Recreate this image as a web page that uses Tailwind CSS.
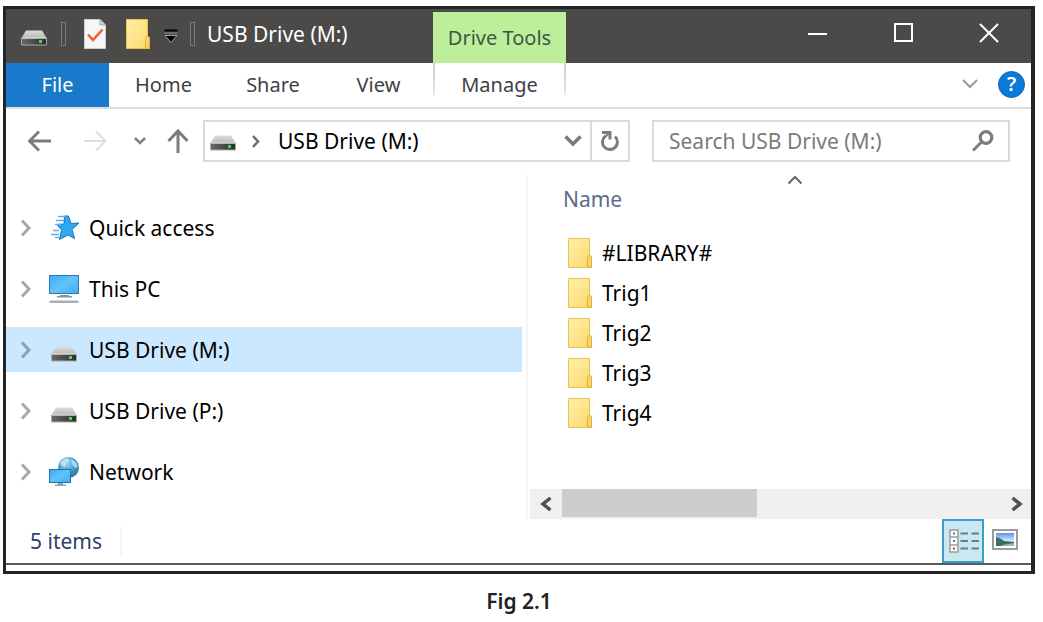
<!DOCTYPE html>
<html lang="en">
<head>
  <meta charset="UTF-8" />
  <meta name="viewport" content="width=device-width, initial-scale=1.0"/>
  <title>USB Drive (M:)</title>
  <script src="https://cdn.jsdelivr.net/npm/@tailwindcss/browser@4"></script>
</head>
<body class="bg-white pt-[6px] pl-[3px] pr-2 font-['Noto_Sans','Open_Sans',sans-serif] text-[21px] leading-7 text-black">

  <!-- Shared icons -->
  <svg class="absolute size-0" aria-hidden="true">
    <defs>
      <linearGradient id="driveTop" x1="0" y1="0" x2="0" y2="1"><stop offset="0" stop-color="#dedede"/><stop offset="1" stop-color="#b9b9b9"/></linearGradient>
      <linearGradient id="driveFront" x1="0" y1="0" x2="1" y2="0"><stop offset="0" stop-color="#6a6a6a"/><stop offset="1" stop-color="#2c2c2c"/></linearGradient>
      <linearGradient id="paper" x1="0" y1="0" x2="1" y2="1"><stop offset="0" stop-color="#fff0a8"/><stop offset="1" stop-color="#fbda6c"/></linearGradient>
      <linearGradient id="screen" x1="0" y1="0" x2="1" y2="1"><stop offset="0" stop-color="#38aef5"/><stop offset=".5" stop-color="#62c2fd"/><stop offset="1" stop-color="#3aaef8"/></linearGradient>
      <radialGradient id="globe" cx=".4" cy=".3" r=".8"><stop offset="0" stop-color="#a5d8ee"/><stop offset=".5" stop-color="#4a9fc6"/><stop offset="1" stop-color="#1f6792"/></radialGradient>
      <linearGradient id="landscape" x1="0" y1="0" x2="0" y2="1"><stop offset="0" stop-color="#5b8ff0"/><stop offset=".6" stop-color="#d6ecfa"/><stop offset="1" stop-color="#7fb0cf"/></linearGradient>
    </defs>
    <symbol id="drive" viewBox="0 0 26 16">
      <path d="M5 0.5h16l4.5 7.5h-25z" fill="url(#driveTop)"/>
      <path d="M0.5 8h25v7h-25z" fill="url(#driveFront)" stroke="#a9a9a9"/>
      <path d="M1 8h24" stroke="#efefef"/>
      <rect x="18" y="10" width="3" height="3" fill="#3fe04a"/>
    </symbol>
    <symbol id="folder" viewBox="0 0 24 30">
      <path d="M0.5 0.5h21v16.500l2 2v10.500h-23z" fill="url(#paper)" stroke="#e9c34c"/>
      <path d="M19.500 29v-8.500q0-3 2-3t2 3v8.500z" fill="#f8d568" stroke="#dfb23a"/>
    </symbol>
    <symbol id="expand" viewBox="0 0 12 18">
      <path d="M2 1.500l7 7.500l-7 7.500" fill="none" stroke="currentColor" stroke-width="3"/>
    </symbol>
  </svg>

  <!-- Window -->
  <div class="border-3 border-r-4 border-[#242424]">

    <!-- Title bar -->
    <header class="flex h-[54px] bg-[#4b4a48] text-white">
      <div class="flex w-[427px] items-center pb-1 pl-[15px]">
        <svg class="mt-2 h-4 w-[26px]"><use href="#drive"/></svg>
        <span class="ml-[14px] h-6 w-[5px] border border-[#7c7b79]"></span>
        <button aria-label="Properties" class="ml-[18px]">
          <svg class="h-[30px] w-[22px]" viewBox="0 0 22 30">
            <path d="M0.500 0.500h15.500l5.500 5.500v23.500h-21z" fill="#f6f6f6" stroke="#cfcfcf"/>
            <path d="M16 0.500v5.500h5.500z" fill="#d9d9d9" stroke="#a5a5a5"/>
            <path d="M4 15.500l5 5.500l9.500-10.500" fill="none" stroke="#ee6432" stroke-width="2.600"/>
          </svg>
        </button>
        <button aria-label="New folder" class="ml-5"><svg class="h-[30px] w-6"><use href="#folder"/></svg></button>
        <button aria-label="Customize toolbar" class="mt-1 ml-[14px]">
          <svg class="h-[15px] w-[14px]" viewBox="0 0 14 15">
            <path d="M0.500 4h13" stroke="#8d8c8a"/>
            <path d="M0.500 1.500h13" stroke="#000" stroke-width="2"/>
            <path d="M1 6.500h12l-6 7z" fill="#000" stroke="#a09f9d"/>
          </svg>
        </button>
        <span class="ml-3 h-6 w-[5px] border border-[#7c7b79]"></span>
        <h1 class="ml-3">USB Drive (M:)</h1>
      </div>
      <div class="mt-[3px] flex w-[133px] items-center justify-center bg-[#bdef9b] text-[20px] text-[#3c5648]">Drive Tools</div>
      <div class="ml-auto flex items-center gap-[66px] pr-8 pb-[6px]">
        <button aria-label="Minimize"><svg class="h-5 w-5" viewBox="0 0 20 20"><path d="M1 11h19" stroke="#fff" stroke-width="2"/></svg></button>
        <button aria-label="Maximize"><svg class="h-5 w-5" viewBox="0 0 20 20"><path d="M2 1h17v17h-17z" fill="none" stroke="#fff" stroke-width="2"/></svg></button>
        <button aria-label="Close"><svg class="h-5 w-5" viewBox="0 0 20 20"><path d="M1 1l18 18M19 1l-18 18" stroke="#fff" stroke-width="2"/></svg></button>
      </div>
    </header>

    <!-- Ribbon tabs -->
    <nav class="flex h-[46px] border-b-2 border-[#dcdddd] text-[20px] text-[#3f3f46]">
      <button class="w-[103px] bg-[#1979ca] text-white">File</button>
      <button class="w-[109px]">Home</button>
      <button class="w-[110px]">Share</button>
      <button class="w-[105px] pr-1">View</button>
      <div class="flex w-[133px] justify-between">
        <span class="h-8 w-[2px] bg-linear-to-b from-[#c3cdd0] to-[#e6eaeb]"></span>
        <button>Manage</button>
        <span class="h-8 w-[2px] bg-linear-to-b from-[#c3cdd0] to-[#e6eaeb]"></span>
      </div>
      <div class="ml-auto flex items-center gap-5 pr-[6px] pb-[2px]">
        <button aria-label="Collapse the ribbon"><svg class="h-[10px] w-4" viewBox="0 0 16 10"><path d="M1 1l7 7l7-7" fill="none" stroke="#9a9a9a" stroke-width="2"/></svg></button>
        <button aria-label="Help" class="flex size-[27px] items-center justify-center rounded-full border border-[#0a64b8] bg-[#0b79d8] text-[20px] font-semibold text-white">?</button>
      </div>
    </nav>

    <!-- Address row -->
    <div class="flex items-center pt-[11px] pr-[21px] pl-[22px] text-[#808080]">
      <button aria-label="Back"><svg class="h-[22px] w-6" viewBox="0 0 24 22"><path d="M23 11h-21M11 1.500l-9.500 9.500l9.500 9.500" fill="none" stroke="#7c7c7c" stroke-width="3"/></svg></button>
      <button aria-label="Forward" class="ml-8"><svg class="h-[22px] w-6" viewBox="0 0 24 22"><path d="M0 11h21M12 1.500l9.500 9.500l-9.500 9.500" fill="none" stroke="#dedede" stroke-width="2"/></svg></button>
      <button aria-label="Recent locations" class="ml-[26px]"><svg class="h-2 w-3" viewBox="0 0 12 8"><path d="M1 1l5 5l5-5" fill="none" stroke="#808080" stroke-width="2.500"/></svg></button>
      <button aria-label="Up" class="ml-[21px]"><svg class="h-6 w-[22px]" viewBox="0 0 22 24"><path d="M11 24v-22M1.500 12l9.500-10l9.500 10" fill="none" stroke="#7c7c7c" stroke-width="3"/></svg></button>
      <div class="ml-[14px] flex h-[42px] flex-1 items-center border-2 border-[#d9d9d9] pl-[5px]">
        <svg class="mt-1 h-4 w-[26px]"><use href="#drive"/></svg>
        <svg class="ml-4 h-[13px] w-2" viewBox="0 0 8 13"><path d="M1 1l5 5.500l-5 5.500" fill="none" stroke="#6e6e6e" stroke-width="2.500"/></svg>
        <span class="ml-[18px] flex-1 text-black">USB Drive (M:)</span>
        <button aria-label="Previous locations" class="mr-2"><svg class="h-3 w-[18px]" viewBox="0 0 18 12"><path d="M1.500 1.500l7.500 7.500l7.500-7.500" fill="none" stroke="#7a7a7a" stroke-width="3.500"/></svg></button>
        <button aria-label="Refresh" class="flex h-full w-[38px] items-center justify-center border-l-2 border-[#d9d9d9]">
          <svg class="h-[22px] w-5" viewBox="0 0 20 22"><path d="M15 6.500a7.500 7.500 0 1 1-9.500-.5" fill="none" stroke="#7c7c7c" stroke-width="3"/><path d="M2 2.500h8v7" fill="none" stroke="#7c7c7c" stroke-width="3"/><path d="M4.500 7.500l5-4.500" stroke="#7c7c7c" stroke-width="2"/></svg>
        </button>
      </div>
      <label class="ml-[22px] flex h-[42px] w-[358px] items-center border-2 border-[#d9d9d9] pr-[14px] pl-[15px]">
        <input type="text" aria-label="Search" placeholder="Search USB Drive (M:)" class="w-0 flex-1 outline-none placeholder:text-[#7b7b7b]"/>
        <svg class="h-[22px] w-[22px]" viewBox="0 0 22 22"><circle cx="14" cy="7.500" r="5.800" fill="none" stroke="#7c7c7c" stroke-width="3.200"/><path d="M9.500 12l-8.500 8.500" stroke="#7c7c7c" stroke-width="3"/></svg>
      </label>
    </div>

    <!-- Panes -->
    <main class="flex pt-[13px]">
      <!-- Folder tree -->
      <ul class="flex flex-[517] flex-col gap-4 pt-[30px]">
        <li class="flex h-[45px] items-center pl-[14px]">
          <svg class="h-[18px] w-3 text-[#a8a8a8]"><use href="#expand"/></svg>
          <svg class="ml-[14px] h-[30px] w-[34px]" viewBox="0 0 34 30">
            <path d="M18.500 3h4l2.500 7.500l8-.5l-7 6.500l2.500 9l-6.500-3.500l-8.500 4.500l2-9.500l-4.500-5.500l7-.5z" fill="#2fa8f2" stroke="#1976bd"/>
            <path d="M12 3.500h8M10 7.500h8M9 11.500h6M7 17.500h6M5 21.500h8M9 24.500h4" stroke="#5bb4e8" stroke-width="1.500"/>
          </svg>
          <a href="#" class="ml-[9px]">Quick access</a>
        </li>
        <li class="flex h-[45px] items-center pl-[14px]">
          <svg class="h-[18px] w-3 text-[#a8a8a8]"><use href="#expand"/></svg>
          <svg class="ml-[14px] h-[30px] w-[34px]" viewBox="0 0 34 30">
            <rect x="3.500" y="1.500" width="29" height="18" fill="url(#screen)" stroke="#3478a0"/>
            <path d="M14 21h9v1h3v1.500h-15v-1.500h3z" fill="#7d98a8"/>
            <path d="M4 26.500h28l1 2.500h-30z" fill="#a6b0b8"/>
          </svg>
          <a href="#" class="ml-[9px]">This PC</a>
        </li>
        <li class="flex h-[45px] items-center bg-[#cce8ff] pl-[14px]">
          <svg class="h-[18px] w-3 text-[#8b9eae]"><use href="#expand"/></svg>
          <svg class="mt-2 mr-1 ml-[19px] h-4 w-[26px]"><use href="#drive"/></svg>
          <a href="#" class="ml-2">USB Drive (M:)</a>
        </li>
        <li class="flex h-[45px] items-center pl-[14px]">
          <svg class="h-[18px] w-3 text-[#a8a8a8]"><use href="#expand"/></svg>
          <svg class="mt-2 mr-1 ml-[19px] h-4 w-[26px]"><use href="#drive"/></svg>
          <a href="#" class="ml-2">USB Drive (P:)</a>
        </li>
        <li class="flex h-[45px] items-center pl-[14px]">
          <svg class="h-[18px] w-3 text-[#a8a8a8]"><use href="#expand"/></svg>
          <svg class="ml-[14px] h-[30px] w-[34px]" viewBox="0 0 34 30">
            <circle cx="22.500" cy="10.500" r="10.500" fill="url(#globe)"/>
            <path d="M14 6q4-5 8-5l2 3l-4 2l-1 4l-3-1zM25 2l5 3l2 5l-3 1l-3-4z" fill="#d2edf5" opacity=".7"/>
            <rect x="3.500" y="12.500" width="21" height="13" fill="url(#screen)" stroke="#2672a4"/>
            <path d="M12 26h5v1.500h3v1.500h-11v-1.500h3z" fill="#8aa2b0"/>
          </svg>
          <a href="#" class="ml-[9px]">Network</a>
        </li>
      </ul>

      <!-- File list -->
      <section class="ml-1 flex flex-[504] flex-col border-l-2 border-[#f5f5f5]">
        <div class="flex justify-center pl-8">
          <svg class="h-[10px] w-4" viewBox="0 0 16 10"><path d="M1.500 8.500l6.500-6.500l6.500 6.500" fill="none" stroke="#666" stroke-width="2"/></svg>
        </div>
        <table class="w-full">
          <thead>
            <tr><th class="h-7 pl-[35px] text-left align-middle font-normal text-[#5c6b8a]">Name</th></tr>
            <tr aria-hidden="true"><td class="h-5"></td></tr>
          </thead>
          <tbody>
            <tr><td class="h-10 py-0 pl-10"><div class="flex items-center gap-[10px]"><svg class="h-[30px] w-6"><use href="#folder"/></svg>#LIBRARY#</div></td></tr>
            <tr><td class="h-10 py-0 pl-10"><div class="flex items-center gap-[10px]"><svg class="h-[30px] w-6"><use href="#folder"/></svg>Trig1</div></td></tr>
            <tr><td class="h-10 py-0 pl-10"><div class="flex items-center gap-[10px]"><svg class="h-[30px] w-6"><use href="#folder"/></svg>Trig2</div></td></tr>
            <tr><td class="h-10 py-0 pl-10"><div class="flex items-center gap-[10px]"><svg class="h-[30px] w-6"><use href="#folder"/></svg>Trig3</div></td></tr>
            <tr><td class="h-10 py-0 pl-10"><div class="flex items-center gap-[10px]"><svg class="h-[30px] w-6"><use href="#folder"/></svg>Trig4</div></td></tr>
          </tbody>
        </table>

        <!-- Horizontal scrollbar -->
        <div class="mt-14 ml-[2px] flex h-[30px] items-center bg-[#f0f0f0]">
          <button aria-label="Scroll left" class="flex w-8 justify-center"><svg class="h-[14px] w-3" viewBox="0 0 12 14"><path d="M10.500 1l-7.500 6l7.500 6" fill="none" stroke="#505050" stroke-width="3.500"/></svg></button>
          <div class="mb-[2px] h-7 w-[195px] bg-[#cdcdcd]"></div>
          <button aria-label="Scroll right" class="ml-auto flex w-7 justify-center"><svg class="h-[14px] w-3" viewBox="0 0 12 14"><path d="M1.500 1l7.500 6l-7.500 6" fill="none" stroke="#505050" stroke-width="3.500"/></svg></button>
        </div>
      </section>
    </main>

    <!-- Status bar -->
    <footer class="mb-[6px] flex h-[46px] items-stretch border-b-2 border-[#5b5959] pl-6 text-[#2e4168]">
      <span class="my-2 flex w-[92px] items-center border-r-2 border-[#f5f5f5]">5 items</span>
      <button aria-label="Details view" class="ml-auto flex w-[42px] items-center justify-center border-2 border-[#3aa0cb] bg-[#c9e8f2]">
        <svg class="h-[26px] w-8" viewBox="0 0 32 26">
          <path d="M3 2h8v7h-8zM3 9h8v8h-8zM3 17h8v7h-8z" fill="#fff" stroke="#9c9c9c" stroke-width="1.500"/>
          <path d="M13.500 5.500h7.500M24.500 5.500h7.500M13.500 13h7.500M24.500 13h7.500M13.500 20.500h7.500M24.500 20.500h7.500" stroke="#6a7d85" stroke-width="2"/>
          <rect x="6" y="4.500" width="2" height="2" fill="#4f7f8a"/><rect x="6" y="12" width="2" height="2" fill="#6a62f0"/><rect x="6" y="19.500" width="2" height="2" fill="#dc2f3c"/>
        </svg>
      </button>
      <button aria-label="Large icons view" class="mr-[13px] mb-1 ml-2 flex items-center">
        <svg class="h-[21px] w-[26px]" viewBox="0 0 26 21">
          <rect x="1" y="1" width="24" height="19" fill="#fff" stroke="#9c9c9c" stroke-width="2"/>
          <rect x="4" y="4" width="18" height="13" fill="url(#landscape)"/>
          <path d="M4 8q5 1 8 4l10 1v4h-18z" fill="#3d6e62"/>
          <path d="M10 16l12-2v3h-12z" fill="#8fb9c9"/>
        </svg>
      </button>
    </footer>
  </div>

  <p class="pt-[13px] text-center font-semibold text-[#222]">Fig 2.1</p>
</body>
</html>
